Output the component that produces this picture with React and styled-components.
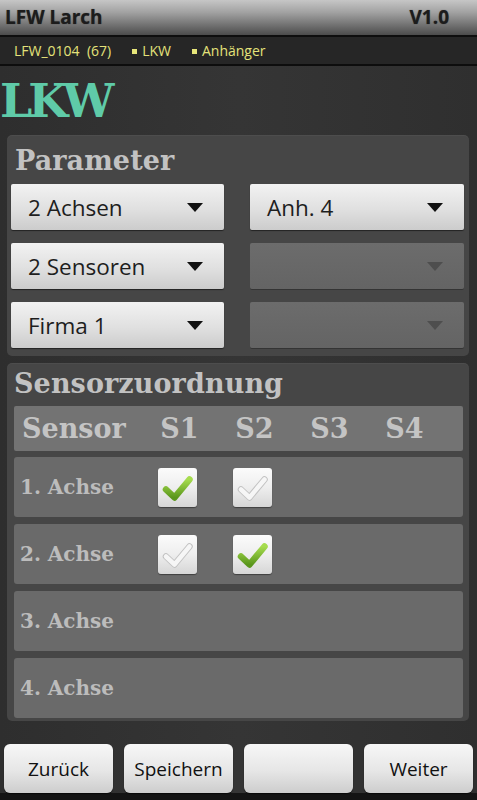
import styled, { createGlobalStyle } from "styled-components";

const GlobalStyle = createGlobalStyle`
  html, body {
    margin: 0;
    padding: 0;
    background: #2c2c2c;
  }
  * {
    box-sizing: border-box;
  }
`;

const dropdowns = [
  { label: "2 Achsen", enabled: true },
  { label: "Anh. 4", enabled: true },
  { label: "2 Sensoren", enabled: true },
  { label: "", enabled: false },
  { label: "Firma 1", enabled: true },
  { label: "", enabled: false },
];

const axles = [
  { label: "1. Achse", checks: [true, false] },
  { label: "2. Achse", checks: [false, true] },
  { label: "3. Achse", checks: [] },
  { label: "4. Achse", checks: [] },
];

const tick = "M8 21.5 L16.5 29.5 L31.5 11.5";

const Check = ({ on }) => (
  <CheckBox>
    <svg width="39" height="39" viewBox="0 0 39 39">
      <defs>
        <linearGradient id="green" x1="0" y1="0" x2="0" y2="1">
          <stop offset="0" stopColor="#a6dc4e" />
          <stop offset="1" stopColor="#5a961c" />
        </linearGradient>
      </defs>
      {on ? (
        <path
          d={tick}
          fill="none"
          stroke="url(#green)"
          strokeWidth="6.5"
          strokeLinecap="round"
          strokeLinejoin="round"
        />
      ) : (
        <>
          <path
            d={tick}
            fill="none"
            stroke="#c2c2c2"
            strokeWidth="6.5"
            strokeLinecap="round"
            strokeLinejoin="round"
          />
          <path
            d={tick}
            fill="none"
            stroke="#f6f6f6"
            strokeWidth="4.5"
            strokeLinecap="round"
            strokeLinejoin="round"
          />
        </>
      )}
    </svg>
  </CheckBox>
);

const App = () => {
  return (
    <Screen>
      <GlobalStyle />
      <TitleBar>
        <span>LFW Larch</span>
        <span>V1.0</span>
      </TitleBar>
      <SubBar>
        <SubItem>LFW_0104&nbsp;&nbsp;(67)</SubItem>
        <SubItem $bullet>LKW</SubItem>
        <SubItem $bullet>Anhänger</SubItem>
      </SubBar>
      <Heading>LKW</Heading>

      <Panel $pad="4px 5px 8px 4px">
        <PanelTitle $h={45} $indent={4}>Parameter</PanelTitle>
        <SelectGrid>
          {dropdowns.map((d, i) => (
            <Select key={i} $enabled={d.enabled}>
              <span>{d.label}</span>
              <Arrow $enabled={d.enabled} />
            </Select>
          ))}
        </SelectGrid>
      </Panel>

      <Panel $pad="0 6px 3px 7px" $gap>
        <PanelTitle $h={43} $indent={0}>Sensorzuordnung</PanelTitle>
        <Table>
          <HeadRow>
            <span>Sensor</span>
            <HeadCell>S1</HeadCell>
            <HeadCell>S2</HeadCell>
            <HeadCell>S3</HeadCell>
            <HeadCell>S4</HeadCell>
          </HeadRow>
          <Rows>
            {axles.map((a) => (
              <AxleRow key={a.label}>
                <span>{a.label}</span>
                {a.checks.map((c, i) => (
                  <Cell key={i}>
                    <Check on={c} />
                  </Cell>
                ))}
              </AxleRow>
            ))}
          </Rows>
        </Table>
      </Panel>

      <Footer>
        <Button>Zurück</Button>
        <Button>Speichern</Button>
        <Button></Button>
        <Button>Weiter</Button>
      </Footer>
    </Screen>
  );
};

const Screen = styled.div`
  width: 477px;
  height: 800px;
  display: flex;
  flex-direction: column;
  background: linear-gradient(90deg, #2e2e2e, #353535 50%, #2f2f2f);
  overflow: hidden;
`;

const TitleBar = styled.div`
  height: 37px;
  display: flex;
  align-items: center;
  justify-content: space-between;
  padding: 0 28px 2px 5px;
  background: linear-gradient(180deg, #c6c6c6 0%, #a2a2a2 35%, #4c4c4c 100%);
  border-bottom: 2px solid #0e0e0e;
  font-family: "Open Sans", sans-serif;
  font-weight: 700;
  font-size: 19px;
  color: #1c1c1c;
  text-shadow: 0 0 1px rgba(0, 0, 0, 0.5);
`;

const SubBar = styled.div`
  height: 29px;
  display: flex;
  align-items: center;
  gap: 21px;
  padding: 0 0 1px 14px;
  background: #262626;
  border-bottom: 2px solid #0d0d0d;
  font-family: "Open Sans", sans-serif;
  font-size: 14px;
  color: #e4e27a;
`;

const SubItem = styled.span`
  display: flex;
  align-items: center;
  gap: 5px;

  &::before {
    content: "";
    display: ${(p) => (p.$bullet ? "block" : "none")};
    width: 5px;
    height: 5px;
    margin-top: 2px;
    background: #e8e67a;
  }
`;

const Heading = styled.div`
  height: 69px;
  display: flex;
  align-items: center;
  padding-top: 1px;
  font-family: "DejaVu Serif", serif;
  font-weight: 700;
  font-size: 46px;
  letter-spacing: -4px;
  line-height: 1;
  color: #5fcba8;
`;

const Panel = styled.div`
  margin: ${(p) => (p.$gap ? "7px" : "0")} 8px 0 7px;
  padding: ${(p) => p.$pad};
  background: #464646;
  border-radius: 5px;
  box-shadow: inset 0 1px 0 rgba(255, 255, 255, 0.04);
`;

const PanelTitle = styled.div`
  height: ${(p) => p.$h}px;
  display: flex;
  align-items: center;
  padding: 0 0 2px ${(p) => p.$indent}px;
  font-family: "DejaVu Serif", serif;
  font-weight: 700;
  font-size: 27px;
  letter-spacing: 0.1px;
  color: #c2c2c2;
`;

const SelectGrid = styled.div`
  display: grid;
  grid-template-columns: 213px 214px;
  column-gap: 26px;
  row-gap: 13px;
`;

const Select = styled.div`
  height: 46px;
  display: flex;
  align-items: center;
  justify-content: space-between;
  padding: 0 21px 0 17px;
  border-radius: 2px;
  background: ${(p) =>
    p.$enabled
      ? "linear-gradient(180deg, #f2f2f2 0%, #e0e0e0 55%, #cccccc 100%)"
      : "linear-gradient(180deg, #6c6c6c, #646464)"};
  box-shadow: ${(p) =>
    p.$enabled ? "0 1px 1px rgba(0,0,0,0.5)" : "0 1px 0 rgba(0,0,0,0.25)"};
  font-family: "Open Sans", sans-serif;
  font-size: 22.5px;
  color: #1e1e1e;
`;

const Arrow = styled.span`
  width: 0;
  height: 0;
  border-left: 8px solid transparent;
  border-right: 8px solid transparent;
  border-top: 9px solid ${(p) => (p.$enabled ? "#111" : "#4e4e4e")};
  margin-top: 1px;
`;

const Table = styled.div`
  display: flex;
  flex-direction: column;
  gap: 6px;
`;

const Rows = styled.div`
  display: flex;
  flex-direction: column;
  gap: 7px;
`;

const HeadRow = styled.div`
  height: 45px;
  display: grid;
  grid-template-columns: 125px repeat(4, 75px);
  align-items: center;
  padding-left: 8px;
  background: #737373;
  border-radius: 2px;
  font-family: "DejaVu Serif", serif;
  font-weight: 700;
  font-size: 27px;
  color: #c4c4c4;
`;

const HeadCell = styled.span`
  text-align: center;
  margin-left: -10px;
`;

const AxleRow = styled.div`
  height: 60px;
  display: grid;
  grid-template-columns: 125px repeat(4, 75px);
  align-items: center;
  padding-left: 6px;
  background: #6a6a6a;
  border-radius: 3px;
  font-family: "DejaVu Serif", serif;
  font-weight: 700;
  font-size: 20px;
  color: #bcbcbc;
`;

const Cell = styled.div`
  display: flex;
  justify-content: center;
  margin-left: -10px;
`;

const CheckBox = styled.div`
  width: 39px;
  height: 39px;
  border-radius: 3px;
  background: linear-gradient(180deg, #fbfbfb 0%, #eeeeee 50%, #d6d6d6 100%);
  box-shadow: 0 1px 1px rgba(0, 0, 0, 0.4);

  svg {
    display: block;
  }
`;

const Footer = styled.div`
  margin-top: auto;
  height: 56px;
  display: grid;
  grid-template-columns: repeat(4, 109px);
  column-gap: 11px;
  padding: 0 4px 7px 4px;
  background: linear-gradient(180deg, transparent 0, transparent 49px, #141414 49px);
`;

const Button = styled.button`
  height: 49px;
  border: 0;
  border-radius: 6px;
  background: linear-gradient(180deg, #f7f7f7 0%, #e6e6e6 55%, #cdcdcd 100%);
  box-shadow: 0 1px 1px rgba(0, 0, 0, 0.6);
  font-family: "Open Sans", sans-serif;
  font-size: 19px;
  color: #111;
  padding: 0;
`;

export default App;
